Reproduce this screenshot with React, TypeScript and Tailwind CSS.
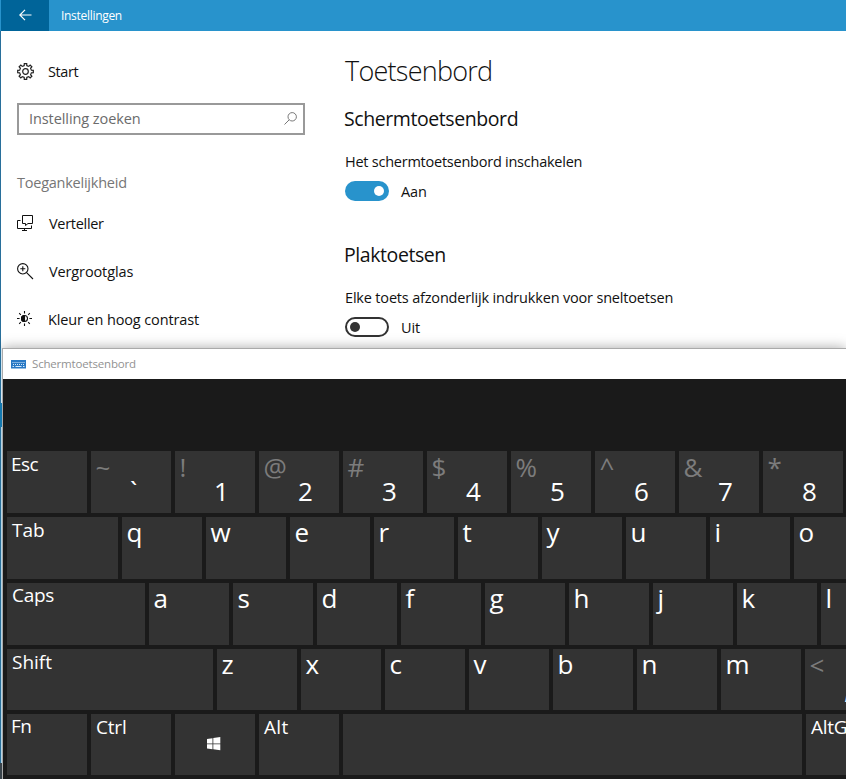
import type { ReactNode } from "react";

type KeyProps = { w: string; children?: ReactNode };

function Key({ w, children }: KeyProps) {
  return <div className={`${w} h-full shrink-0 bg-[#333333]`}>{children}</div>;
}

function Letter({ c }: { c: string }) {
  return (
    <Key w="w-20">
      <div className="pl-[4.5px] text-[26px] leading-[30px] text-white">{c}</div>
    </Key>
  );
}

function Digit({ top, main }: { top: string; main: string }) {
  return (
    <Key w="w-20">
      <div className="h-[25px] pl-[4.5px] pt-px text-[26px] leading-[30px] text-[#7c7c7c]">{top}</div>
      <div className="pl-[39px] text-[26px] leading-[30px] text-white">{main}</div>
    </Key>
  );
}

function Named({ w, label, track }: { w: string; label: string; track: string }) {
  return (
    <Key w={w}>
      <div className={`pl-[5px] text-[19px] whitespace-nowrap text-white ${track}`}>{label}</div>
    </Key>
  );
}

const digits = [
  ["~", "`"],
  ["!", "1"],
  ["@", "2"],
  ["#", "3"],
  ["$", "4"],
  ["%", "5"],
  ["^", "6"],
  ["&", "7"],
  ["*", "8"],
];

function Row({ h, children }: { h: string; children: ReactNode }) {
  return <div className={`flex gap-1 ${h}`}>{children}</div>;
}

function Keyboard() {
  return (
    <div className="flex flex-col gap-1 pl-1 pt-[72px]">
      <Row h="h-[62px]">
        <Named w="w-20" label="Esc" track="-ml-px leading-[26px] tracking-[-0.5px]" />
        {digits.map(([t, m]) => (
          <Digit key={m} top={t} main={m} />
        ))}
      </Row>
      <Row h="h-[62px]">
        <Named w="w-[111px]" label="Tab" track="leading-[26px] tracking-[0px]" />
        {"qwertyuio".split("").map((c) => (
          <Letter key={c} c={c} />
        ))}
      </Row>
      <Row h="h-[62px]">
        <Named w="w-[138px]" label="Caps" track="leading-6 tracking-[-0.3px]" />
        {"asdfghjkl".split("").map((c) => (
          <Letter key={c} c={c} />
        ))}
      </Row>
      <Row h="h-[61px]">
        <Named w="w-[206px]" label="Shift" track="leading-[26px] tracking-[0px]" />
        {"zxcvbnm".split("").map((c) => (
          <Letter key={c} c={c} />
        ))}
        <Digit top="<" main="," />
      </Row>
      <Row h="h-[61px]">
        <Named w="w-20" label="Fn" track="-ml-px leading-6 tracking-[-0.5px]" />
        <Named w="w-20" label="Ctrl" track="leading-[26px] tracking-[-0.2px]" />
        <Key w="w-20">
          <div className="pl-8 pt-[23px]">
            <svg width="14" height="14" viewBox="0 0 14 14" fill="#fff">
              <path d="M0 2 5.5 1.2V6.4H0ZM6.3 1.1 13.3 0V6.4H6.3ZM0 7.3H5.5V12.2L0 11.5ZM6.3 7.3H13.3V13.3L6.3 12.3Z" />
            </svg>
          </div>
        </Key>
        <Named w="w-20" label="Alt" track="leading-[26px] tracking-[0.3px]" />
        <Key w="w-[459px]" />
        <Named w="w-20" label="AltGr" track="leading-[26px] tracking-[-0.3px]" />
      </Row>
    </div>
  );
}

function GearIcon() {
  const teeth = Array.from({ length: 8 }, (_, i) => i * 45);
  return (
    <svg width="17" height="17" viewBox="0 0 17 17" fill="none" stroke="#222" strokeWidth="1.2">
      {teeth.map((a) => (
        <path key={a} transform={`rotate(${a} 8.5 8.5)`} d="M6.2 3.1 7.2 2.6 7.3.7H9.7L9.8 2.6 10.8 3.1" />
      ))}
      <circle cx="8.5" cy="8.5" r="2.8" />
    </svg>
  );
}

function NarratorIcon() {
  return (
    <svg width="17" height="17" viewBox="0 0 17 17" fill="none" stroke="#111" strokeWidth="1">
      <path d="M5.5.5H15.5V8.5H11L8.5 10.5V8.5H5.5ZM3.5 5.5H.5V13.5H14.5V10.5M7.5 13.5V15.5M5 15.5H10" />
    </svg>
  );
}

function MagnifierIcon() {
  return (
    <svg width="17" height="17" viewBox="0 0 17 17" fill="none" stroke="#111" strokeWidth="1.1">
      <circle cx="5.8" cy="5.8" r="5.2" />
      <path d="M9.6 9.6 16 16M5.8 3.3V8.3M3.3 5.8H8.3" />
    </svg>
  );
}

function ContrastIcon() {
  return (
    <svg className="mb-0.5" width="15" height="15" viewBox="0 0 15 15" fill="none" stroke="#111" strokeWidth="1.1">
      <circle cx="7.5" cy="7.5" r="3" />
      <path d="M7.5 4.5A3 3 0 0 0 7.5 10.5Z" fill="#111" />
      <path d="M7.5 0V2.4M7.5 12.6V15M0 7.5H2.6M12.4 7.5H15M2.2 2.2 3.8 3.8M11.2 11.2 12.8 12.8M12.8 2.2 11.2 3.8M3.8 11.2 2.2 12.8" />
    </svg>
  );
}

function NavItem({ icon, label, track }: { icon: ReactNode; label: string; track: string }) {
  return (
    <div className="flex h-12 items-center">
      <div className="w-8 shrink-0">{icon}</div>
      <span className={`pt-0.5 text-[14.5px] whitespace-nowrap ${track}`}>{label}</span>
    </div>
  );
}

function Toggle({ on, label }: { on: boolean; label: string }) {
  return (
    <div className="flex h-5 items-center gap-3">
      {on ? (
        <div className="flex h-5 w-11 items-center justify-end rounded-full bg-[#2893cc] pr-[5px]">
          <div className="size-[10px] rounded-full bg-white" />
        </div>
      ) : (
        <div className="flex h-5 w-11 items-center rounded-full border-2 border-[#333] pl-[3px]">
          <div className="size-[10px] rounded-full bg-[#333]" />
        </div>
      )}
      <span className="pt-px text-[14.5px] leading-5 tracking-[-0.15px]">{label}</span>
    </div>
  );
}

export default function App() {
  return (
    <div className="flex h-[779px] w-[846px] flex-col overflow-hidden bg-white font-['Open_Sans','Noto_Sans',sans-serif] text-[#111]">
      <header className="flex h-[31px] shrink-0 bg-[#2893cc]">
        <div className="flex w-[49px] items-center border-l border-[#2893cc] bg-[#006499] pb-px pl-[18px]">
          <svg width="13" height="12" viewBox="0 0 13 12" fill="none" stroke="#fff" strokeWidth="1.2">
            <path d="M12.5 6H1M6 .8.8 6 6 11.2" />
          </svg>
        </div>
        <span className="pl-3 text-[12px] leading-[31px] tracking-[-0.3px] text-white">Instellingen</span>
      </header>

      <main className="flex h-[317px] shrink-0 border-l border-[#286f9b]">
        <nav className="w-[328px] shrink-0 pl-4 pt-4">
          <NavItem icon={<GearIcon />} label="Start" track="-ml-px tracking-[-0.4px]" />
          <div className="mt-2 flex h-8 w-72 items-center justify-between border-2 border-[#999] pl-2.5 pr-1.5 pb-px">
            <span className="text-[14.5px] tracking-[-0.08px] text-[#6b6b6b]">Instelling zoeken</span>
            <svg width="13" height="13" viewBox="0 0 13 13" fill="none" stroke="#777" strokeWidth="1">
              <circle cx="8.2" cy="4.8" r="4.2" />
              <path d="M5.2 7.8.5 12.5" />
            </svg>
          </div>
          <div className="mt-[37px] h-[27px] text-[14.5px] leading-[22px] tracking-[-0.24px] text-[#767676]">Toegankelijkheid</div>
          <NavItem icon={<NarratorIcon />} label="Verteller" track="tracking-[-0.3px]" />
          <NavItem icon={<MagnifierIcon />} label="Vergrootglas" track="tracking-[-0.12px]" />
          <NavItem icon={<ContrastIcon />} label="Kleur en hoog contrast" track="-ml-px tracking-[-0.13px]" />
        </nav>
        <section className="flex flex-col pl-4 pt-5">
          <h1 className="h-10 text-[27px] leading-10 font-[340] tracking-[-0.75px]">Toetsenbord</h1>
          <h2 className="-ml-px mt-3 h-8 text-[19.5px] leading-8 tracking-[-0.42px]">Schermtoetsenbord</h2>
          <p className="mt-[17px] h-5 text-[14.5px] leading-5 tracking-[-0.24px]">Het schermtoetsenbord inschakelen</p>
          <div className="mt-[9px]">
            <Toggle on label="Aan" />
          </div>
          <h2 className="-ml-px mt-[38px] h-8 text-[19.5px] leading-8 tracking-[-0.42px]">Plaktoetsen</h2>
          <p className="mt-[17px] h-5 text-[14.5px] leading-5 tracking-[-0.18px]">Elke toets afzonderlijk indrukken voor sneltoetsen</p>
          <div className="mt-[9px]">
            <Toggle on={false} label="Uit" />
          </div>
        </section>
      </main>

      <div className="flex grow">
        <div className="relative z-10 flex w-0.5 shrink-0 flex-col">
          <div className="h-[55px] border-l border-[#286f9b] bg-[#d5e5ee]" />
          <div className="h-6 bg-[#1479b0]" />
          <div className="h-[336px] border-l border-[#286f9b] bg-[#b4d3e3]" />
          <div className="grow bg-[#39434a]" />
        </div>
        <div className="min-w-0 grow border-l border-t border-[#aaa] bg-[#1a1a1a] shadow-[0_0_12px_rgba(0,0,0,0.35)]">
          <div className="flex h-[30px] items-center bg-white pl-2">
            <svg width="15" height="9" viewBox="0 0 15 9">
              <path fill="#2878c4" d="M0 0H15V8.5H0Z" />
              <path stroke="#d4e8fa" strokeWidth="1" strokeDasharray="1 1" d="M1.5 2.5H14M2 4.5H14" />
              <path stroke="#d4e8fa" strokeWidth="1" d="M1.5 6.5H3M4.5 6.5H10.5M12 6.5H13.5" />
            </svg>
            <span className="pl-1.5 text-[11.5px] tracking-[-0.18px] text-[#929292]">Schermtoetsenbord</span>
          </div>
          <Keyboard />
        </div>
      </div>
    </div>
  );
}
